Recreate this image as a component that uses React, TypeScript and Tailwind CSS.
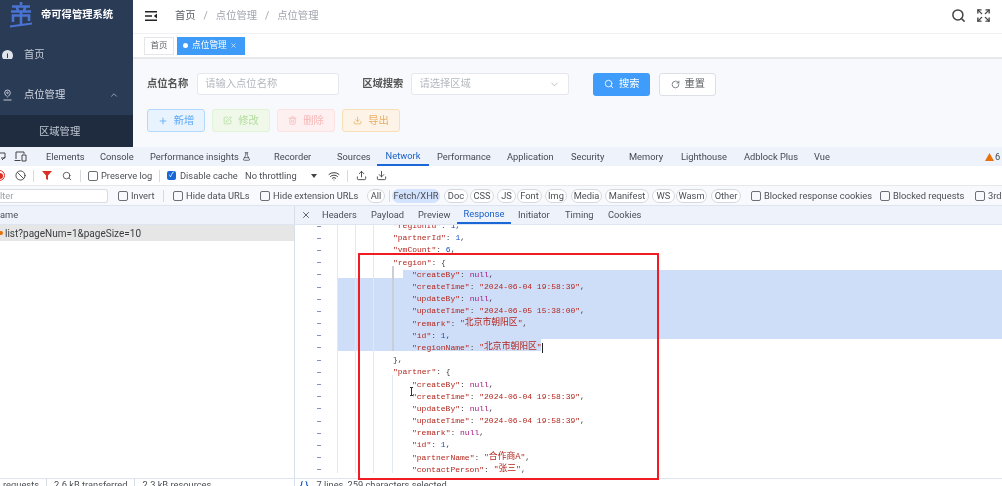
import React from 'react';
import {
  Search, RotateCw, Plus, SquarePen, Trash2, Download, Upload, ChevronUp, ChevronDown, X,
  Ban, Wifi, FlaskConical, Expand,
} from 'lucide-react';

const ChromeCheck: React.FC<{ label: string; checked?: boolean; className?: string }> = ({ label, checked, className }) => (
  <div className={`flex items-center shrink-0 whitespace-nowrap ${className ?? ''}`}>
    {checked ? (
      <span className="w-[9px] h-[9px] shrink-0 rounded-[2px] bg-[#1a68d8] text-white flex items-center justify-center text-[7px] leading-none">✓</span>
    ) : (
      <span className="w-[10px] h-[10px] shrink-0 rounded-[2px] border border-[#6b6f75]" />
    )}
    <span className={checked ? 'ml-[4px]' : 'ml-[3px]'}>{label}</span>
  </div>
);

const Sep = ({ className }: { className: string }) => <span className={`w-px h-[12px] bg-[#d5d9e0] shrink-0 ${className}`} />;

const topTabs: [string, string][] = [
  ['Elements', 'w-[37px] ml-[19px]'],
  ['Console', 'w-[33px] ml-[17px]'],
];
const restTabs: [string, string][] = [
  ['Recorder', 'w-[37px] ml-[36px]'],
  ['Sources', 'w-[31px] ml-[26px]'],
];
const afterTabs: [string, string][] = [
  ['Performance', 'w-[53px] ml-[8px]'],
  ['Application', 'w-[47px] ml-[17px]'],
  ['Security', 'w-[33px] ml-[17px]'],
  ['Memory', 'w-[35px] ml-[25px]'],
  ['Lighthouse', 'w-[46px] ml-[17px]'],
  ['Adblock Plus', 'w-[53px] ml-[17px]'],
  ['Vue', 'w-[16px] ml-[17px]'],
];

const pills: [string, string][] = [
  ['Doc', 'w-[24px] ml-[4px]'],
  ['CSS', 'w-[24px] ml-[2px]'],
  ['JS', 'w-[19px] ml-[3px]'],
  ['Font', 'w-[25px] ml-[1px]'],
  ['Img', 'w-[22px] ml-[3px]'],
  ['Media', 'w-[31px] ml-[4px]'],
  ['Manifest', 'w-[44px] ml-[3px]'],
  ['WS', 'w-[23px] ml-[3px]'],
  ['Wasm', 'w-[31px] ml-[1px]'],
  ['Other', 'w-[30px] ml-[4px]'],
];

type Line = {
  level: number;
  k?: string;
  v?: string;
  t?: 'null' | 'num' | 'str' | 'cjk';
  tail?: string;
  raw?: string;
  sel?: 'first' | 'full' | 'last';
};

const lines: Line[] = [
  { level: 3, k: 'regionId', v: '1', t: 'num', tail: ',' },
  { level: 3, k: 'partnerId', v: '1', t: 'num', tail: ',' },
  { level: 3, k: 'vmCount', v: '6', t: 'num', tail: ',' },
  { level: 3, k: 'region', raw: '{' },
  { level: 4, k: 'createBy', v: 'null', t: 'null', tail: ',', sel: 'first' },
  { level: 4, k: 'createTime', v: '"2024-06-04 19:58:39"', t: 'str', tail: ',', sel: 'full' },
  { level: 4, k: 'updateBy', v: 'null', t: 'null', tail: ',', sel: 'full' },
  { level: 4, k: 'updateTime', v: '"2024-06-05 15:38:00"', t: 'str', tail: ',', sel: 'full' },
  { level: 4, k: 'remark', v: '北京市朝阳区', t: 'cjk', tail: ',', sel: 'full' },
  { level: 4, k: 'id', v: '1', t: 'num', tail: ',', sel: 'full' },
  { level: 4, k: 'regionName', v: '北京市朝阳区', t: 'cjk', sel: 'last' },
  { level: 3, raw: '},' },
  { level: 3, k: 'partner', raw: '{' },
  { level: 4, k: 'createBy', v: 'null', t: 'null', tail: ',' },
  { level: 4, k: 'createTime', v: '"2024-06-04 19:58:39"', t: 'str', tail: ',' },
  { level: 4, k: 'updateBy', v: 'null', t: 'null', tail: ',' },
  { level: 4, k: 'updateTime', v: '"2024-06-04 19:58:39"', t: 'str', tail: ',' },
  { level: 4, k: 'remark', v: 'null', t: 'null', tail: ',' },
  { level: 4, k: 'id', v: '1', t: 'num', tail: ',' },
  { level: 4, k: 'partnerName', v: '合作商A', t: 'cjk', tail: ',' },
  { level: 4, k: 'contactPerson', v: '张三', t: 'cjk', tail: ',' },
];

const Guide = ({ w }: { w: string }) => <span className={`${w} h-full shrink-0 border-l border-[#e3e7ee]`} />;

const CodeRow: React.FC<{ line: Line }> = ({ line }) => {
  const rowSel = line.sel === 'full' || line.sel === 'last';
  return (
    <div className={`flex h-[12.2px] ${rowSel ? 'bg-[#cfdef8]' : ''} ${line.sel === 'last' ? 'w-[204px]' : ''}`}>
      <Guide w="w-[18px]" />
      <Guide w="w-[18px]" />
      <Guide w="w-[19px]" />
      {line.level === 4 && (
        <span className={`w-[11px] h-full shrink-0 ${line.sel ? 'border-l-2 border-[#c9ced8]' : 'border-l border-[#e3e7ee]'}`} />
      )}
      <div className={`flex-1 h-full pt-[6px] flex items-center whitespace-pre ${line.level === 4 ? 'pl-[9px]' : 'pl-[1px]'} ${line.sel === 'first' ? 'bg-[linear-gradient(transparent_4px,#cfdef8_4px)]' : ''}`}>
        {line.k && <span className="text-[#b3261e]">"{line.k}"</span>}
        {line.k && <span className="text-[#444]">: </span>}
        {line.raw && <span className="text-[#444]">{line.raw}</span>}
        {line.t === 'null' && <span className="text-[#a3147f]">{line.v}</span>}
        {line.t === 'num' && <span className="text-[#1a4fc4]">{line.v}</span>}
        {line.t === 'str' && <span className="text-[#b3261e]">{line.v}</span>}
        {line.t === 'cjk' && (
          <span className="text-[#b3261e]">"<span className="text-[8.8px]">{line.v}</span>"</span>
        )}
        {line.tail && <span className="text-[#444]">{line.tail}</span>}
        {line.sel === 'last' && <span className="w-px h-[10px] bg-[#222]" />}
      </div>
    </div>
  );
};

const ActionBtn: React.FC<{ label: string; icon: React.ReactNode; cls: string }> = ({ label, icon, cls }) => (
  <button className={`w-[58px] h-[23px] rounded-[3px] border flex items-center justify-center gap-[6px] text-[10.3px] ${cls}`}>
    {icon}
    {label}
  </button>
);

export default function App() {
  return (
    <div className="relative w-[1002px] h-[486px] overflow-hidden bg-white blur-[0.35px] [font-family:'Roboto','Noto_Sans_CJK_SC',sans-serif]">
      {/* app being debugged */}
      <div className="flex h-[147px]">
        <aside className="w-[133px] shrink-0 bg-[#2a3b55] text-[#c2c9d4] text-[10.3px] flex flex-col">
          <div className="h-[30px] flex items-center pl-[9px]">
            <svg width="24" height="26" viewBox="0 0 24 26" fill="none" stroke="#4a74d4" strokeWidth="2.6">
              <path d="M12 0v3M3 4.500h18M7.500 4.500l1.500 4M16.500 4.500l-1.500 4M2 9.500h20" />
              <path d="M4 20v-6.500h16V19M12 9.500V23" />
              <path d="M1 24.500l22-3" strokeWidth="1.800" />
            </svg>
            <span className="ml-[8px] font-bold text-white">帝可得管理系统</span>
          </div>
          <div className="h-[48px] flex items-center pl-[2px]">
            <svg width="11" height="9" viewBox="0 0 11 9" fill="#dfe3ea" className="shrink-0">
              <path d="M5.500 0a5.500 5.500 0 0 1 5.500 5.500c0 1.500-.5 2.700-1.200 3.500H1.200C.5 8.200 0 7 0 5.500A5.500 5.500 0 0 1 5.500 0z" />
              <path d="M5 8V3.500h1V8z" fill="#2a3b55" />
            </svg>
            <span className="ml-[11px] mt-[1px]">首页</span>
          </div>
          <div className="h-[38px] -mt-[1px] pb-[3px] flex items-center pl-[3px] pr-[14px]">
            <svg width="9" height="12" viewBox="0 0 9 12" fill="none" stroke="#c2c9d4" className="shrink-0">
              <path d="M4.500 1a2.800 2.800 0 0 1 2.800 2.800c0 1.600-1.500 3-2.800 4.200C3.200 6.800 1.700 5.400 1.700 3.800A2.800 2.800 0 0 1 4.500 1z" />
              <circle cx="4.500" cy="3.800" r="0.800" />
              <path d="M0.500 11h8" />
            </svg>
            <span className="ml-[12px] text-[#d5dae2]">点位管理</span>
            <ChevronUp size={10} className="ml-auto text-[#aab2c0]" />
          </div>
          <div className="flex-1 bg-[#1f2c3f] flex items-center pl-[39px] pt-[2px]">区域管理</div>
        </aside>

        <main className="flex-1 flex flex-col min-w-0">
          <header className="h-[34px] shrink-0 flex items-center pl-[12px] pr-[11px] pb-[2px] text-[10.3px] border-b border-[#f0f1f3]">
            <svg width="12" height="10" viewBox="0 0 12 10" fill="#222" className="shrink-0">
              <path d="M0 0h12v1.600H0zM0 4.200h7v1.600H0zM0 8.400h12V10H0zM12 2.600v4.800L8.800 5z" />
            </svg>
            <span className="ml-[18px] text-[#5a5e66]">首页</span>
            <span className="mx-[8px] text-[#a0a5ad]">/</span>
            <span className="text-[#a0a5ad]">点位管理</span>
            <span className="mx-[8px] text-[#a0a5ad]">/</span>
            <span className="text-[#a0a5ad]">点位管理</span>
            <Search size={15} strokeWidth={2.4} className="ml-auto text-[#444]" />
            <Expand size={15} strokeWidth={2.2} className="ml-[10px] text-[#444]" />
          </header>
          <div className="h-[25px] shrink-0 flex items-center pl-[11px] gap-[3px] border-b-2 border-[#e6e8eb]">
            <span className="w-[30px] h-[18px] border border-[#e4e6ea] flex items-center justify-center text-[8.5px] text-[#5a5e66]">首页</span>
            <span className="w-[68px] h-[18px] bg-[#3e9bf7] text-white flex items-center pl-[6px] text-[8.7px]">
              <span className="w-[5px] h-[5px] rounded-full bg-white mr-[4px]" />
              点位管理
              <X size={7} className="ml-[3px]" />
            </span>
          </div>
          <div className="flex-1 bg-[#f8f9fc] pl-[14px] pt-[14px]">
            <div className="flex items-center h-[22px] text-[10.3px]">
              <span className="font-bold text-[#555]">点位名称</span>
              <div className="ml-[9px] w-[142px] h-[22px] rounded-[3px] border border-[#e4e7ed] bg-white flex items-center pl-[7px] text-[#b4b8bf]">请输入点位名称</div>
              <span className="ml-[23px] font-bold text-[#555]">区域搜索</span>
              <div className="ml-[8px] w-[158px] h-[22px] rounded-[3px] border border-[#e4e7ed] bg-white flex items-center pl-[7px] pr-[8px] text-[#b4b8bf]">
                请选择区域
                <ChevronDown size={11} className="ml-auto text-[#b4b8bf]" />
              </div>
              <button className="ml-[24px] w-[57px] h-[23px] rounded-[3px] bg-[#3f9cfb] text-white flex items-center justify-center gap-[5px]">
                <Search size={10} />搜索
              </button>
              <button className="ml-[9px] w-[57px] h-[23px] rounded-[3px] border border-[#dcdfe6] bg-white text-[#606266] flex items-center justify-center gap-[5px]">
                <RotateCw size={9} />重置
              </button>
            </div>
            <div className="flex mt-[14px] gap-[7px]">
              <ActionBtn label="新增" icon={<Plus size={10} />} cls="bg-[#e8f3fe] border-[#b3d8fd] text-[#5ba8f7]" />
              <ActionBtn label="修改" icon={<SquarePen size={9} />} cls="bg-[#eff8e9] border-[#e1f3d8] text-[#b3dd9c]" />
              <ActionBtn label="删除" icon={<Trash2 size={9} />} cls="bg-[#fef0f0] border-[#fde2e2] text-[#f7b6b6]" />
              <ActionBtn label="导出" icon={<Download size={9} />} cls="bg-[#fdf3e6] border-[#f9dfb9] text-[#e9ad62]" />
            </div>
          </div>
        </main>
      </div>

      {/* devtools */}
      <div className="flex flex-col h-[339px] text-[9.3px] text-[#4b4f55]">
        <div className="h-[19px] shrink-0 bg-[#edf2fb] flex items-center text-[#444a52]">
          <svg width="9" height="9" viewBox="0 0 9 9" fill="none" stroke="#444" className="-ml-[3px] shrink-0">
            <path d="M1 1h7v5H4M5 8l3-3" />
          </svg>
          <svg width="13" height="11" viewBox="0 0 13 11" fill="none" stroke="#444" className="ml-[8px] shrink-0">
            <path d="M2 8V1h8v2M0.500 9.500h6M8 4h4v6H8z" />
          </svg>
          {topTabs.map(([l, c]) => <span key={l} className={`${c} shrink-0 whitespace-nowrap`}>{l}</span>)}
          <span className="ml-[17px] shrink-0 whitespace-nowrap flex items-center w-[88px]">
            Performance insights
            <FlaskConical size={9} className="ml-[3px] shrink-0" />
          </span>
          {restTabs.map(([l, c]) => <span key={l} className={`${c} shrink-0 whitespace-nowrap`}>{l}</span>)}
          <span className="ml-[9px] w-[52px] h-full shrink-0 border-b-2 border-[#1a68d8] text-[#1a5fc4] flex items-center justify-center">Network</span>
          {afterTabs.map(([l, c]) => <span key={l} className={`${c} shrink-0 whitespace-nowrap`}>{l}</span>)}
          <svg width="9" height="8" viewBox="0 0 9 8" className="ml-[155px] shrink-0" fill="#e8710a"><path d="M4.500 0L9 8H0z" /></svg>
          <span className="ml-[1px]">6</span>
        </div>

        <div className="h-[19px] shrink-0 bg-white flex items-center">
          <span className="-ml-[6px] w-[11px] h-[11px] rounded-full border border-[#d93025] flex items-center justify-center shrink-0">
            <span className="w-[6px] h-[6px] rounded-full bg-[#d93025]" />
          </span>
          <Ban size={11} className="ml-[10px] shrink-0 text-[#444]" />
          <Sep className="ml-[7px]" />
          <svg width="10" height="9" viewBox="0 0 10 9" fill="#d93025" className="ml-[8px] shrink-0"><path d="M0 0h10L6 4.500V9L4 8V4.500z" /></svg>
          <Search size={10} className="ml-[10px] shrink-0 text-[#444]" />
          <Sep className="ml-[8px]" />
          <ChromeCheck label="Preserve log" className="ml-[7px] w-[66px]" />
          <Sep className="ml-[5px]" />
          <ChromeCheck label="Disable cache" checked className="ml-[7px] w-[70px]" />
          <span className="ml-[8px] w-[56px] shrink-0 whitespace-nowrap">No throttling</span>
          <span className="ml-[10px] w-0 h-0 border-x-[3px] border-x-transparent border-t-[4px] border-t-[#444] shrink-0" />
          <Wifi size={12} className="ml-[11px] shrink-0 text-[#444]" />
          <Sep className="ml-[7px]" />
          <Upload size={11} className="ml-[8px] shrink-0 text-[#444]" />
          <Download size={11} className="ml-[9px] shrink-0 text-[#444]" />
        </div>

        <div className="h-[20px] shrink-0 bg-[#f7f9fd] border-t border-[#e6e8ec] flex items-center">
          <div className="w-[108px] h-[14px] shrink-0 rounded-r-[3px] border border-l-0 border-[#d8dbe0] bg-white flex items-center overflow-hidden">
            <span className="text-[#9a9ea5]">lter</span>
          </div>
          <ChromeCheck label="Invert" className="ml-[10px] w-[37px]" />
          <Sep className="ml-[8px]" />
          <ChromeCheck label="Hide data URLs" className="ml-[9px] w-[77px]" />
          <ChromeCheck label="Hide extension URLs" className="ml-[10px] w-[98px]" />
          <span className="ml-[9px] w-[18px] h-[14px] shrink-0 rounded-full border border-[#d5d9de] bg-white flex items-center justify-center">All</span>
          <Sep className="ml-[4px]" />
          <span className="ml-[2px] w-[48px] h-[14px] shrink-0 rounded-full bg-[#d3e3fd] flex items-center justify-center">Fetch/XHR</span>
          {pills.map(([l, c]) => (
            <span key={l} className={`${c} h-[14px] shrink-0 rounded-full border border-[#d5d9de] bg-white flex items-center justify-center`}>{l}</span>
          ))}
          <ChromeCheck label="Blocked response cookies" className="ml-[10px] w-[119px]" />
          <ChromeCheck label="Blocked requests" className="ml-[10px] w-[85px]" />
          <ChromeCheck label="3rd" className="ml-[10px]" />
        </div>

        <div className="h-[20px] shrink-0 bg-[#edf2fb] border-y border-[#dfe5f0] flex items-center">
          <span className="w-[294px] shrink-0 h-full flex items-center">ame</span>
          <div className="flex-1 h-full border-l border-[#d8dfeb] flex items-center">
            <X size={10} className="ml-[6px] shrink-0 text-[#444]" />
            <span className="ml-[11px] w-[34px] shrink-0">Headers</span>
            <span className="ml-[15px] w-[32px] shrink-0">Payload</span>
            <span className="ml-[15px] w-[32px] shrink-0">Preview</span>
            <span className="ml-[7px] w-[54px] h-full shrink-0 border-b-2 border-[#1a68d8] text-[#1a5fc4] flex items-center justify-center">Response</span>
            <span className="ml-[7px] w-[33px] shrink-0">Initiator</span>
            <span className="ml-[14px] w-[28px] shrink-0">Timing</span>
            <span className="ml-[15px] w-[33px] shrink-0">Cookies</span>
          </div>
        </div>

        <div className="flex-1 min-h-0 flex">
          <div className="w-[294px] shrink-0">
            <div className="h-[16px] bg-[#e6e6e6] flex items-center text-[#3c4043] text-[10px]">
              <span className="w-[3px] h-[4px] bg-[#e8710a] rounded-r-full shrink-0" />
              <span className="ml-[2px]">list?pageNum=1&amp;pageSize=10</span>
            </div>
          </div>
          <div className="flex-1 min-w-0 border-l border-[#d8dfeb] flex overflow-hidden [font-family:'Liberation_Mono','Noto_Sans_CJK_SC',monospace] text-[8px]">
            <div className="w-[42px] shrink-0 -mt-[8px]">
              {lines.map((_, i) => (
                <div key={i} className="h-[12.2px] pt-[6px] flex items-center pl-[22px]">
                  <span className="w-[4px] h-px bg-[#7f95b8]" />
                </div>
              ))}
            </div>
            <div className="flex-1 min-w-0 -mt-[8px]">
              {lines.map((line, i) => <CodeRow key={i} line={line} />)}
            </div>
          </div>
        </div>

        <div className="h-[8px] shrink-0 border-t border-[#dfe5f0] bg-white flex text-[#4b4f55] overflow-hidden">
          <div className="w-[294px] shrink-0 flex items-start pl-[3px] leading-[11px]">
            <span>requests</span>
            <Sep className="ml-[7px]" />
            <span className="ml-[7px]">2.6 kB transferred</span>
            <Sep className="ml-[7px]" />
            <span className="ml-[7px]">2.3 kB resources</span>
          </div>
          <div className="flex-1 border-l border-[#d8dfeb] flex items-start pl-[5px] leading-[11px]">
            <span className="font-bold text-[#1a5fc4]">{'{ }'}</span>
            <span className="ml-[8px]">7 lines, 259 characters selected</span>
          </div>
        </div>
      </div>

      {/* red annotation drawn on the recording */}
      <div className="absolute left-[358px] top-[253px] w-[301px] h-[227px] border-2 border-[#ef1c24]" />
      {/* mouse cursor */}
      <div className="absolute left-[410px] top-[387px] w-[3px] h-[9px] border-x-0 border-y border-[#333] flex justify-center">
        <span className="w-px h-full bg-[#333]" />
      </div>
    </div>
  );
}
